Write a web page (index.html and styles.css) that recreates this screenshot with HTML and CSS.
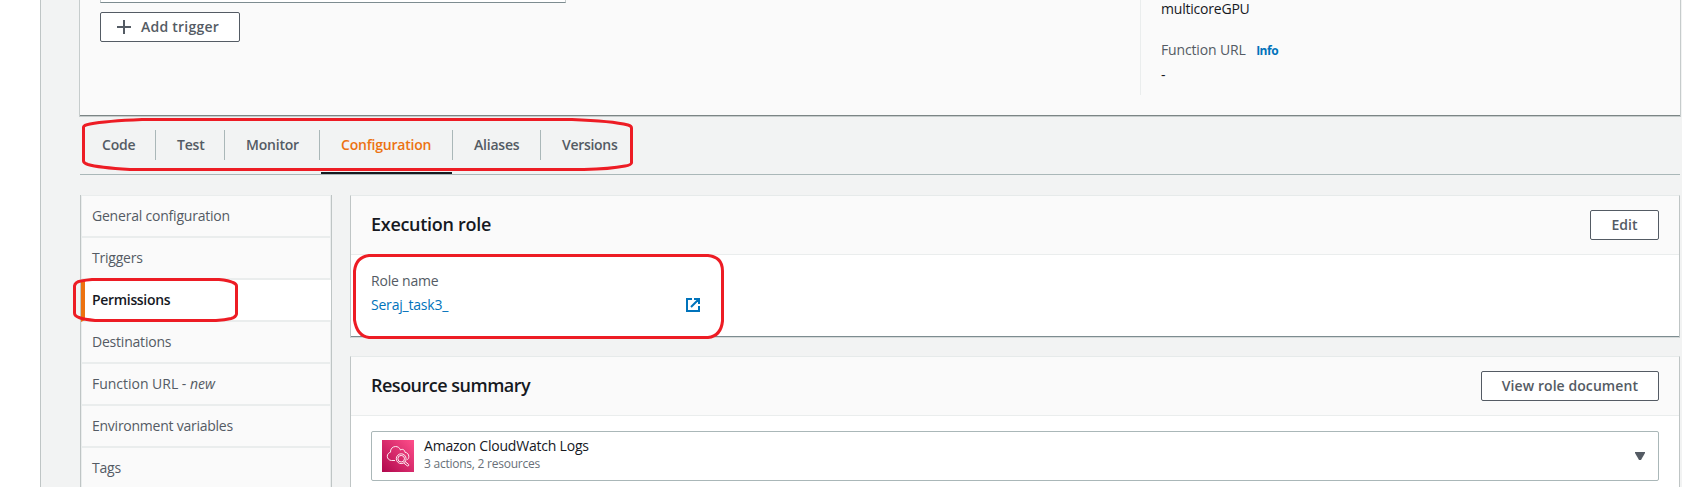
FILE: index.html
```
<!DOCTYPE html>
<html lang="en">
<head>
<meta charset="utf-8">
<title>Lambda function configuration</title>
<link rel="stylesheet" href="styles.css">
</head>
<body>
<div class="app">
  <div class="rail"></div>
  <main class="main">
    <section class="overview">
      <div class="designer">
        <div class="trigger-box"></div>
        <button class="btn btn-add">
          <svg width="14" height="14" viewBox="0 0 14 14"><path d="M7 0v14M0 7h14" stroke="#545b64" stroke-width="2"/></svg>
          <span>Add trigger</span>
        </button>
      </div>
      <div class="details">
        <div class="value">multicoreGPU</div>
        <div class="label">Function URL <a class="info">Info</a></div>
        <div class="value dash">-</div>
      </div>
    </section>

    <nav class="tabs">
      <a class="tab code">Code</a>
      <a class="tab test">Test</a>
      <a class="tab monitor">Monitor</a>
      <a class="tab config active">Configuration</a>
      <a class="tab aliases">Aliases</a>
      <a class="tab versions">Versions</a>
    </nav>

    <div class="content">
      <nav class="side">
        <a class="item">General configuration</a>
        <a class="item">Triggers</a>
        <a class="item selected">Permissions</a>
        <a class="item">Destinations</a>
        <a class="item url">Function URL - <em>new</em></a>
        <a class="item env">Environment variables</a>
        <a class="item">Tags</a>
      </nav>
      <div class="panels">
        <section class="panel">
          <header class="panel-head">
            <h2>Execution role</h2>
            <button class="btn btn-edit">Edit</button>
          </header>
          <div class="role">
            <div class="label">Role name</div>
            <div class="role-row">
              <a class="link">Seraj_task3_</a>
              <svg width="14" height="14" viewBox="0 0 14 14" fill="none" stroke="#0073bb" stroke-width="2"><path d="M6 1H1v12h12V8M8 1h5v5M13 1L5 9"/></svg>
            </div>
          </div>
        </section>
        <section class="panel">
          <header class="panel-head">
            <h2 class="summary">Resource summary</h2>
            <button class="btn">View role document</button>
          </header>
          <div class="resource">
            <div class="select">
              <svg class="service" width="32" height="32" viewBox="0 0 32 32">
                <defs><linearGradient id="g" x1="0" y1="1" x2="1" y2="0"><stop offset="0" stop-color="#b0084d"/><stop offset="1" stop-color="#ff4f8b"/></linearGradient></defs>
                <path d="M0 0h32v32H0z" fill="url(#g)"/>
                <g fill="none" stroke="#fff" stroke-opacity=".9">
                  <path d="M13 20.5H9.5C7 20.300 5.300 18.600 5.300 16.300c0-2 1.300-3.600 3.200-4.100C8.200 9 10.600 6.500 13.500 6.500c2.400 0 4.200 1.300 5 3.500 1.900-1.400 4.200-.4 4.400 2.200 2.500.5 3.900 2 3.900 4.400 0 1.300-.5 2.400-1.500 3.100"/>
                  <circle cx="19.200" cy="18.700" r="4.900"/>
                  <circle cx="19.200" cy="18.700" r="3.300"/>
                  <path d="M23 21.500l3.500 2.800c.9.800-.2 2.300-1.300 1.500L21.800 23"/>
                </g>
              </svg>
              <div class="service-text">
                <div class="service-name">Amazon CloudWatch Logs</div>
                <div class="service-sub">3 actions, 2 resources</div>
              </div>
              <svg class="caret" width="10" height="8" viewBox="0 0 10 8"><path d="M0 0h10v1L6 8H4L0 1z" fill="#545b64"/></svg>
            </div>
          </div>
        </section>
      </div>
    </div>
  </main>
</div>
<svg class="marks" width="1682" height="487" viewBox="0 0 1682 487" fill="none" stroke="#ed1c24" stroke-width="3" stroke-linejoin="round">
  <path d="M83.500 127Q84 125 90 124Q106 121 142 119.500H572Q612 121 628 125Q631.500 126 631.500 128V163Q631 165 625 166Q610 169 584 169.500H130Q98 167.500 88 164.500Q83.500 163 83.500 161Z"/>
  <path d="M74.500 286Q75 282 81 281Q86 280 92 279.500H219Q229 280.500 233 282.500Q236.500 284 236.500 286V314Q236 317 231 318.500Q225 320 216 320.500H95Q84 319.500 79 317.500Q74.500 316 74.500 313Z"/>
  <path d="M369 255.500H708Q722.500 257 722.500 271V321Q721 336 708 337.500H369Q357 336 354.500 320V271Q356 257 369 255.500Z"/>
</svg>
</body>
</html>
```
FILE: styles.css
```
* { box-sizing: border-box; }

body {
  margin: 0;
  width: 1682px;
  height: 487px;
  overflow: hidden;
  position: relative;
  font: 14px/22px "Open Sans", "Noto Sans", sans-serif;
  letter-spacing: -0.21px;
  color: #16191f;
}

.app { display: flex; height: 487px; overflow: hidden; }
.rail { width: 41px; flex: none; background: #fff; border-right: 1px solid #bfc5c5; }
.main { width: 1641px; flex: none; background: #f2f3f3; padding-left: 38px; }

.overview {
  display: flex;
  width: 1602px;
  height: 117px;
  background: #fafafa;
  border: solid #c6cccc;
  border-width: 0 1px 1px;
  box-shadow: inset 0 -1px #7c8585;
}
.designer { width: 1061px; height: 95px; border-right: 1px solid #eaeded; padding-left: 20px; }
.trigger-box {
  width: 466px;
  height: 3px;
  background: #fff;
  border: solid #c6cccc;
  border-width: 0 1px;
  border-bottom: 1px solid #7d8c90;
}
.btn {
  display: flex;
  align-items: center;
  justify-content: center;
  height: 30px;
  padding: 0 20px;
  border: 1px solid #545b64;
  border-radius: 2px;
  background: #fff;
  color: #545b64;
  font: 600 14px/22px "Open Sans", "Noto Sans", sans-serif;
  letter-spacing: 0.07px;
  white-space: nowrap;
}
.btn-add { width: 140px; margin: 9px 0 0; padding: 0 0 0 16px; justify-content: flex-start; gap: 10px; letter-spacing: 0.24px; }
.btn-edit { width: 69px; }
.details { padding-left: 20px; }
.value { line-height: 18px; }
.label { color: #545b64; }
.details .label { margin-top: 21px; letter-spacing: -0.15px; }
.info { margin-left: 7px; font-size: 12px; font-weight: 700; color: #0073bb; letter-spacing: -0.5px; }
.details .dash { margin-top: 4px; }

.tabs {
  display: flex;
  width: 1600px;
  height: 58px;
  margin-left: 1px;
  padding-top: 13px;
  border-bottom: 1px solid #aab7b8;
}
.tab {
  position: relative;
  height: 30px;
  padding-left: 21px;
  border-right: 1px solid #aab7b8;
  font-weight: 600;
  line-height: 30px;
  color: #545b64;
}
.code { width: 76px; padding-left: 22px; }
.test { width: 69px; }
.monitor { width: 95px; }
.config { width: 133px; }
.aliases { width: 88px; }
.versions { border: 0; letter-spacing: -0.3px; }
.active { color: #ec7211; }
.active::after {
  content: "";
  position: absolute;
  left: 1px;
  right: 0;
  bottom: -14px;
  height: 2px;
  background: #16191f;
}

.content { display: flex; gap: 18px; margin: 20px 0 0 1px; align-items: flex-start; }
.side {
  width: 252px;
  border: solid #bfc5c5;
  border-width: 0 1px;
  background: #fafafa;
  box-shadow: inset 1px 1px #eaeded, inset -1px 0 #eaeded;
}
.item {
  display: block;
  height: 42px;
  padding: 10px 0 0 11px;
  border-bottom: 2px solid #eaeded;
  line-height: 20px;
  color: #545b64;
}
.item:first-child { height: 43px; padding-top: 11px; }
.selected { background: #fff; border-left: 4px solid #ec7211; padding-left: 7px; font-weight: 600; color: #16191f; letter-spacing: -0.32px; }
.url { letter-spacing: -0.02px; }
.env { letter-spacing: -0.25px; }

.panels { display: flex; flex-direction: column; gap: 18px; width: 1330px; }
.panel {
  background: #fff;
  border: 1px solid #bfc5c5;
  border-top-color: #e6eaea;
  border-bottom-color: #d5dada;
  box-shadow: inset 0 -1px #7d8c90;
}
.panel-head {
  display: flex;
  align-items: center;
  justify-content: space-between;
  height: 59px;
  padding: 0 20px;
  background: #fafafa;
  border-bottom: 1px solid #eaeded;
}
h2 { margin: 0 0 2px; font-size: 18px; line-height: 22px; font-weight: 600; letter-spacing: -0.29px; }
.summary { letter-spacing: -0.5px; }
.role { height: 82px; padding: 15px 20px 0; }
.role-row { display: flex; align-items: center; justify-content: space-between; width: 329px; margin-top: 2px; }
.link { color: #0073bb; }
.resource { height: 160px; padding: 15px 20px; }
.select {
  display: flex;
  align-items: flex-start;
  height: 50px;
  padding: 8px 13px 0 10px;
  border: 1px solid #aab7b8;
  border-radius: 2px;
}
.service-text { margin: -4px 0 0 10px; flex: 1; }
.service-name { line-height: 20px; }
.service-sub { font-size: 12px; line-height: 16px; color: #687078; letter-spacing: -0.24px; }
.caret { margin-top: 12px; }

.marks { position: absolute; left: 0; top: 0; }
```
